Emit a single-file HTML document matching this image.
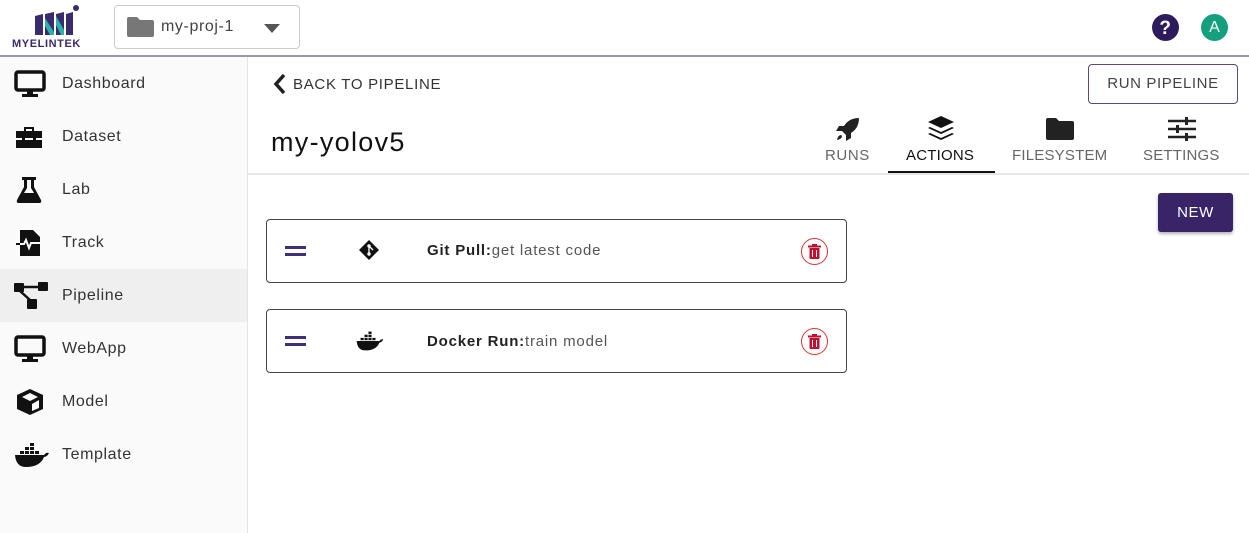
<!DOCTYPE html>
<html><head><style>
*{box-sizing:border-box;margin:0;padding:0}
body{width:1249px;height:533px;overflow:hidden;background:#fff;font-family:"Liberation Sans",sans-serif;color:#222;position:relative;letter-spacing:0.6px}
.hdr{position:absolute;left:0;top:0;width:1249px;height:57px;border-bottom:2px solid #9c95b0;background:#fff}
.side{position:absolute;left:0;top:57px;width:248px;height:476px;background:#fafafa;border-right:1px solid #e4e4e4}
.item{position:absolute;left:0;width:247px;height:53px;display:flex;align-items:center;font-size:16px;color:#333}
.item svg{position:absolute;left:14px}
.item span{position:absolute;left:62px}
.ab{position:absolute}
.card{position:absolute;left:266px;width:581px;height:64px;border:1px solid #444;border-radius:4px;background:#fff}
.tab{position:absolute;top:147px;font-size:15px;color:#666;text-align:center}
</style></head><body>
<div class="hdr">
 <svg class="ab" style="left:33px;top:4px" width="48" height="32" viewBox="0 0 48 32">
  <path d="M2 12 L10 10 L10 31 L2 31Z M12 10 L21 8 L21 31 L12 31Z M23 10 L31 8 L31 31 L23 31Z M33 10 L40 8 L40 31 L33 31Z" fill="#3a2a6e"/>
  <path d="M12 14 L21 28 L21 31 L17 31 L12 22Z M23 12 L31 26 L31 31 L28 31 L23 21Z" fill="#2ab3a6"/>
  <circle cx="43" cy="4" r="3" fill="#3a2a6e"/>
 </svg>
 <div class="ab" style="left:12px;top:38px;font-size:11px;font-weight:bold;color:#3a2a6e;letter-spacing:0.6px">MYELINTEK</div>
 <div class="ab" style="left:114px;top:5px;width:186px;height:44px;border:1px solid #ccc;border-radius:4px"></div>
 <svg class="ab" style="left:127px;top:17px" width="27" height="20"><path d="M0 2 Q0 0 2 0 L10 0 L13 3 L25 3 Q27 3 27 5 L27 18 Q27 20 25 20 L2 20 Q0 20 0 18Z" fill="#777"/></svg>
 <div class="ab" style="left:161px;top:18px;font-size:16px;color:#444">my-proj-1</div>
 <svg class="ab" style="left:264px;top:24px" width="16" height="9"><path d="M0 0 L16 0 L8 9Z" fill="#555"/></svg>
 <svg class="ab" style="left:1152px;top:14px" width="27" height="27"><circle cx="13.5" cy="13.5" r="13.5" fill="#2d1b5e"/><text x="13.5" y="20" text-anchor="middle" font-size="19" font-weight="bold" fill="#fff" font-family="Liberation Sans">?</text></svg>
 <div class="ab" style="left:1201px;top:14px;width:27px;height:27px;border-radius:50%;background:#14a07e;color:#fff;font-size:16px;text-align:center;line-height:27px;letter-spacing:0">A</div>
</div>
<div class="side">
 <div class="item" style="top:0"><svg width="32" height="28" viewBox="0 0 32 28"><rect x="2" y="2" width="28" height="18" rx="2" fill="none" stroke="#111" stroke-width="3.5"/><rect x="13" y="20" width="6" height="5" fill="#111"/><rect x="8" y="24" width="16" height="3" fill="#111"/></svg><span>Dashboard</span></div>
 <div class="item" style="top:53px"><svg width="30" height="26" viewBox="0 0 30 26"><path d="M10 3 H20 V7 H28 V24 H2 V7 H10Z M12 5 V7 H18 V5Z" fill="#111"/><rect x="2" y="14" width="26" height="2" fill="#fafafa"/><rect x="8" y="12" width="3" height="6" fill="#111"/><rect x="19" y="12" width="3" height="6" fill="#111"/></svg><span>Dataset</span></div>
 <div class="item" style="top:106px"><svg width="30" height="30" viewBox="0 0 30 30"><path d="M8 2 H22 V5 H20 V12 L27 25 Q28 28 25 28 H5 Q2 28 3 25 L10 12 V5 H8Z" fill="#111"/><path d="M13 5 H17 V13 L20 18 H10 L13 13Z" fill="#fafafa"/></svg><span>Lab</span></div>
 <div class="item" style="top:159px"><svg width="30" height="30" viewBox="0 0 30 30"><path d="M6 2 H19 L26 9 V28 H6Z" fill="#111"/><path d="M2 16 H10 L12 12 L15 20 L17 15 H28" fill="none" stroke="#fafafa" stroke-width="2"/><path d="M2 16 H6" stroke="#111" stroke-width="2"/></svg><span>Track</span></div>
 <div class="item" style="top:212px;background:#efefef"><svg width="36" height="30" viewBox="0 0 36 30"><rect x="0" y="2" width="10" height="9" rx="1" fill="#111"/><rect x="24" y="1" width="10" height="9" rx="1" fill="#111"/><rect x="13" y="18" width="10" height="10" rx="1" fill="#111"/><path d="M10 6 H24 M6 10 L16 19" stroke="#111" stroke-width="2.5"/></svg><span>Pipeline</span></div>
 <div class="item" style="top:265px"><svg width="32" height="28" viewBox="0 0 32 28"><rect x="2" y="2" width="28" height="18" rx="2" fill="none" stroke="#111" stroke-width="3.5"/><rect x="13" y="20" width="6" height="5" fill="#111"/><rect x="8" y="24" width="16" height="3" fill="#111"/></svg><span>WebApp</span></div>
 <div class="item" style="top:318px"><svg width="32" height="30" viewBox="0 0 32 30"><path d="M16 2 L29 8 V22 L16 28 L3 22 V8Z" fill="#111"/><path d="M8 10 L16 6 L24 10 L16 14Z" fill="#fafafa"/><path d="M18 17 L25 13 V21 L18 24Z" fill="#fafafa"/></svg><span>Model</span></div>
 <div class="item" style="top:371px"><svg width="36" height="28" viewBox="0 0 36 28"><path d="M1 14 H30 Q32 11 35 12 Q33 16 30 16 Q26 26 12 26 Q2 26 1 14Z" fill="#111"/><rect x="6" y="10" width="4" height="3" fill="#111"/><rect x="11" y="10" width="4" height="3" fill="#111"/><rect x="16" y="10" width="4" height="3" fill="#111"/><rect x="11" y="6" width="4" height="3" fill="#111"/><rect x="16" y="6" width="4" height="3" fill="#111"/><rect x="16" y="2" width="4" height="3" fill="#111"/><rect x="21" y="10" width="4" height="3" fill="#111"/></svg><span>Template</span></div>
</div>
<svg class="ab" style="left:273px;top:73px" width="14" height="22"><path d="M11 2 L3 11 L11 20" fill="none" stroke="#222" stroke-width="3.5"/></svg>
<div class="ab" style="left:293px;top:76px;font-size:15px;color:#333;letter-spacing:0.7px">BACK TO PIPELINE</div>
<div class="ab" style="left:1088px;top:64px;width:150px;height:40px;border:1px solid #5a4a80;border-radius:4px;font-size:15px;color:#444;text-align:center;line-height:38px">RUN PIPELINE</div>
<div class="ab" style="left:271px;top:127px;font-size:27px;color:#111;letter-spacing:1.3px">my-yolov5</div>
<svg class="ab" style="left:835px;top:116px" width="26" height="26" viewBox="0 0 26 26"><path d="M24 2 Q14 2 9 10 L4 10 L1 15 L7 15 L11 19 L11 25 L16 22 L16 17 Q24 12 24 2Z" fill="#222"/><path d="M6 19 Q3 19 2 24 Q7 23 7 20Z" fill="#222"/></svg>
<div class="tab" style="left:825px;top:147px">RUNS</div>
<svg class="ab" style="left:927px;top:115px" width="28" height="28" viewBox="0 0 28 28"><path d="M14 1 L27 7 L14 13 L1 7Z" fill="#111"/><path d="M3 12 L14 17 L25 12 L27 13 L14 19 L1 13Z" fill="#111"/><path d="M3 18 L14 23 L25 18 L27 19 L14 25 L1 19Z" fill="#111"/></svg>
<div class="tab" style="left:906px;color:#111;letter-spacing:0.2px">ACTIONS</div>
<div class="ab" style="left:888px;top:171px;width:107px;height:2px;background:#111"></div>
<svg class="ab" style="left:1046px;top:118px" width="28" height="22"><path d="M0 2 Q0 0 2 0 L10 0 L13 3 L26 3 Q28 3 28 5 L28 20 Q28 22 26 22 L2 22 Q0 22 0 20Z" fill="#222"/></svg>
<div class="tab" style="left:1012px;letter-spacing:0.2px">FILESYSTEM</div>
<svg class="ab" style="left:1168px;top:117px" width="28" height="24"><path d="M0 4 H28 M0 12 H28 M0 20 H28" stroke="#222" stroke-width="2.5"/><rect x="17" y="0" width="3" height="8" fill="#222"/><rect x="8" y="8" width="3" height="8" fill="#222"/><rect x="17" y="16" width="3" height="8" fill="#222"/></svg>
<div class="tab" style="left:1143px;letter-spacing:0.2px">SETTINGS</div>
<div class="ab" style="left:248px;top:173px;width:1001px;height:2px;background:#e6e6e6"></div>
<div class="ab" style="left:1158px;top:193px;width:75px;height:39px;background:#3a2468;border-radius:3px;color:#fff;font-size:15px;text-align:center;line-height:39px;box-shadow:0 2px 3px rgba(0,0,0,.3)">NEW</div>
<div class="card" style="top:219px">
 <div class="ab" style="left:18px;top:26px;width:21px;height:3px;background:#3f2f7a"></div><div class="ab" style="left:18px;top:33px;width:21px;height:3px;background:#3f2f7a"></div>
 <svg class="ab" style="left:92px;top:20px" width="20" height="20"><path d="M10 0 L20 10 L10 20 L0 10Z" fill="#111"/><circle cx="10" cy="6" r="1.7" fill="#fff"/><circle cx="10" cy="14" r="1.7" fill="#fff"/><path d="M10 6 V14 M10 6 L14 10" stroke="#fff" stroke-width="1.3"/></svg>
 <div class="ab" style="left:160px;top:22px;font-size:15px;color:#555;letter-spacing:0.8px"><b style="color:#222;font-weight:600">Git Pull:</b>get latest code</div>
 <div class="ab" style="left:534px;top:18px;width:27px;height:27px;border:1.5px solid #d33;border-radius:50%"></div>
 <svg class="ab" style="left:541px;top:24px" width="13" height="15"><rect x="0" y="1.5" width="13" height="2" fill="#c01030"/><rect x="4" y="0" width="5" height="2" fill="#c01030"/><path d="M1.5 4 H11.5 V14 Q11.5 15 10.5 15 H2.5 Q1.5 15 1.5 14Z" fill="#c01030"/><path d="M4.5 6 V13 M8.5 6 V13" stroke="#fff" stroke-width="1"/></svg>
</div>
<div class="card" style="top:309px">
 <div class="ab" style="left:18px;top:26px;width:21px;height:3px;background:#3f2f7a"></div><div class="ab" style="left:18px;top:33px;width:21px;height:3px;background:#3f2f7a"></div>
 <svg class="ab" style="left:88px;top:20px" width="30" height="22" viewBox="0 0 36 28"><path d="M1 14 H30 Q32 11 35 12 Q33 16 30 16 Q26 26 12 26 Q2 26 1 14Z" fill="#111"/><rect x="6" y="10" width="4" height="3" fill="#111"/><rect x="11" y="10" width="4" height="3" fill="#111"/><rect x="16" y="10" width="4" height="3" fill="#111"/><rect x="11" y="6" width="4" height="3" fill="#111"/><rect x="16" y="6" width="4" height="3" fill="#111"/><rect x="16" y="2" width="4" height="3" fill="#111"/><rect x="21" y="10" width="4" height="3" fill="#111"/></svg>
 <div class="ab" style="left:160px;top:23px;font-size:15px;color:#555;letter-spacing:0.8px"><b style="color:#222;font-weight:600">Docker Run:</b>train model</div>
 <div class="ab" style="left:534px;top:18px;width:27px;height:27px;border:1.5px solid #d33;border-radius:50%"></div>
 <svg class="ab" style="left:541px;top:24px" width="13" height="15"><rect x="0" y="1.5" width="13" height="2" fill="#c01030"/><rect x="4" y="0" width="5" height="2" fill="#c01030"/><path d="M1.5 4 H11.5 V14 Q11.5 15 10.5 15 H2.5 Q1.5 15 1.5 14Z" fill="#c01030"/><path d="M4.5 6 V13 M8.5 6 V13" stroke="#fff" stroke-width="1"/></svg>
</div>
</body></html>
